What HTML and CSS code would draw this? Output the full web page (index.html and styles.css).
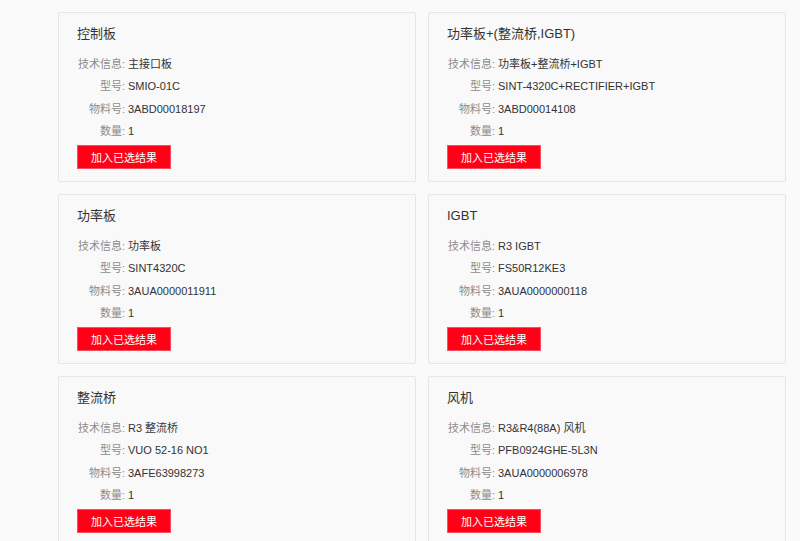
FILE: index.html
```html
<html lang="zh-CN"><head>
    <meta charset="UTF-8">
    <meta name="viewport" content="width=device-width, initial-scale=1.0">
    <title>配件列表</title>
    <link rel="stylesheet" href="styles.css">
</head>
<body>
    <div class="parts">
        <!-- 控制板 -->
        <div class="part-card">
            <h4>控制板</h4>
            <div class="row"><span class="label">技术信息:</span><span class="value">主接口板</span></div>
            <div class="row"><span class="label">型号:</span><span class="value">SMIO-01C</span></div>
            <div class="row"><span class="label">物料号:</span><span class="value">3ABD00018197</span></div>
            <div class="row"><span class="label">数量:</span><span class="value">1</span></div>
            <button class="add-btn">加入已选结果</button>
        </div>

        <div class="part-card">
            <h4>功率板+(整流桥,IGBT)</h4>
            <div class="row"><span class="label">技术信息:</span><span class="value">功率板+整流桥+IGBT</span></div>
            <div class="row"><span class="label">型号:</span><span class="value">SINT-4320C+RECTIFIER+IGBT</span></div>
            <div class="row"><span class="label">物料号:</span><span class="value">3ABD00014108</span></div>
            <div class="row"><span class="label">数量:</span><span class="value">1</span></div>
            <button class="add-btn">加入已选结果</button>
        </div>

        <div class="part-card">
            <h4>功率板</h4>
            <div class="row"><span class="label">技术信息:</span><span class="value">功率板</span></div>
            <div class="row"><span class="label">型号:</span><span class="value">SINT4320C</span></div>
            <div class="row"><span class="label">物料号:</span><span class="value">3AUA0000011911</span></div>
            <div class="row"><span class="label">数量:</span><span class="value">1</span></div>
            <button class="add-btn">加入已选结果</button>
        </div>

        <div class="part-card">
            <h4>IGBT</h4>
            <div class="row"><span class="label">技术信息:</span><span class="value">R3 IGBT</span></div>
            <div class="row"><span class="label">型号:</span><span class="value">FS50R12KE3</span></div>
            <div class="row"><span class="label">物料号:</span><span class="value">3AUA0000000118</span></div>
            <div class="row"><span class="label">数量:</span><span class="value">1</span></div>
            <button class="add-btn">加入已选结果</button>
        </div>

        <div class="part-card">
            <h4>整流桥</h4>
            <div class="row"><span class="label">技术信息:</span><span class="value">R3 整流桥</span></div>
            <div class="row"><span class="label">型号:</span><span class="value">VUO 52-16 NO1</span></div>
            <div class="row"><span class="label">物料号:</span><span class="value">3AFE63998273</span></div>
            <div class="row"><span class="label">数量:</span><span class="value">1</span></div>
            <button class="add-btn">加入已选结果</button>
        </div>

        <div class="part-card">
            <h4>风机</h4>
            <div class="row"><span class="label">技术信息:</span><span class="value">R3&amp;R4(88A) 风机</span></div>
            <div class="row"><span class="label">型号:</span><span class="value">PFB0924GHE-5L3N</span></div>
            <div class="row"><span class="label">物料号:</span><span class="value">3AUA0000006978</span></div>
            <div class="row"><span class="label">数量:</span><span class="value">1</span></div>
            <button class="add-btn">加入已选结果</button>
        </div>
    </div>
</body></html>
```

FILE: styles.css
```css
body {
    margin: 0;
    font-family: "Liberation Sans", Arial, "Noto Sans CJK SC", sans-serif;
    background-color: #fafafa;
    color: #333;
}
.parts {
    display: grid;
    grid-template-columns: 358px 358px;
    gap: 12px;
    padding: 12px 0 12px 58px;
}
.part-card {
    height: 170px;
    box-sizing: border-box;
    padding: 11px 18px 12px 18px;
    border: 1px solid #e6e6e6;
    border-radius: 2px;
    background-color: #f9f9f9;
}
.part-card h4 {
    margin: 0 0 9px 0;
    font-size: 13px;
    font-weight: normal;
    line-height: 20px;
    color: #333;
}
.row {
    display: flex;
    font-size: 11px;
    line-height: 22.4px;
    white-space: nowrap;
}
.label {
    flex: 0 0 48px;
    text-align: right;
    color: #8c8c8c;
}
.value {
    margin-left: 3px;
    color: #333;
}
.add-btn {
    display: block;
    width: 94px;
    height: 24px;
    margin-top: 2px;
    padding: 0;
    border: 1px solid #ff4d5e;
    background: #ff0016;
    color: #fff;
    font-family: inherit;
    font-size: 11px;
    cursor: pointer;
}
```
